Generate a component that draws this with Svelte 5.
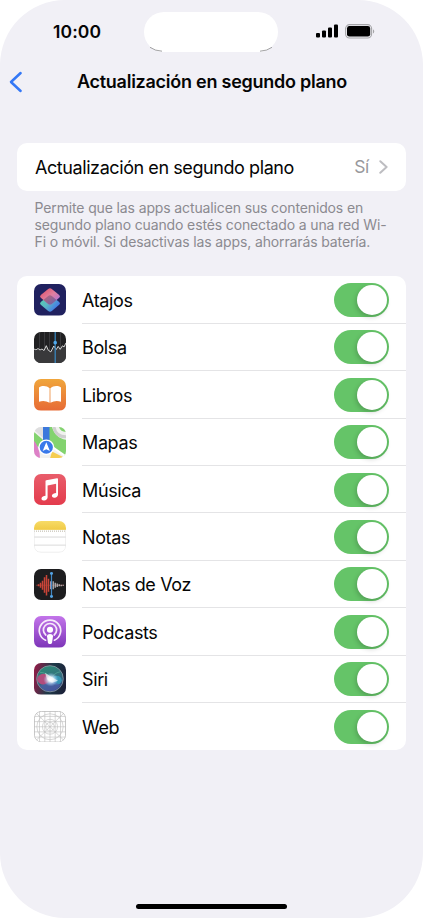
<script lang="ts">
    let apps = $state([
        { id: 'atajos', name: 'Atajos', on: true },
        { id: 'bolsa', name: 'Bolsa', on: true },
        { id: 'libros', name: 'Libros', on: true },
        { id: 'mapas', name: 'Mapas', on: true },
        { id: 'musica', name: 'Música', on: true },
        { id: 'notas', name: 'Notas', on: true },
        { id: 'voz', name: 'Notas de Voz', on: true },
        { id: 'podcasts', name: 'Podcasts', on: true },
        { id: 'siri', name: 'Siri', on: true },
        { id: 'web', name: 'Web', on: true }
    ]);
</script>

<div class="screen">
    <div class="status">
        <span class="time">10:00</span>
        <div class="island">
            <svg width="134" height="40" viewBox="0 0 134 40">
                <path d="M6 35.3q5 3.6 12 3.9M116 39.2q7-.3 12-3.9" fill="none" stroke="#8b8b8d" stroke-width=".8" />
            </svg>
        </div>
        <div class="status-icons">
            <svg width="22" height="14" viewBox="0 0 22 14">
                <rect x="0" y="9" width="4" height="4.6" rx="1.1" />
                <rect x="6" y="6.4" width="4" height="7.2" rx="1.1" />
                <rect x="12" y="3.6" width="4" height="10" rx="1.1" />
                <rect x="18" y=".4" width="4" height="13.2" rx="1.1" />
            </svg>
            <svg width="30" height="15" viewBox="0 0 30 15">
                <rect x=".6" y=".6" width="26" height="13.4" rx="4" fill="none" stroke="#a5a5a8" stroke-width="1.1" />
                <rect x="2" y="2" width="23.2" height="10.6" rx="2.4" />
                <path d="M28 5.2c1.7.7 1.7 3.7 0 4.4z" fill="#a5a5a8" />
            </svg>
        </div>
    </div>

    <header>
        <button class="back" aria-label="Atrás">
            <svg width="14" height="22" viewBox="0 0 14 22">
                <path d="M11.6 2 2 11l9.6 9" fill="none" stroke="#3478f6" stroke-width="2.5" stroke-linecap="round" stroke-linejoin="round" />
            </svg>
        </button>
        <h1>Actualización en segundo plano</h1>
    </header>

    <button class="card main-row">
        <span class="main-label">Actualización en segundo plano</span>
        <span class="value">Sí</span>
        <svg width="9" height="14" viewBox="0 0 9 14">
            <path d="M1.3 1.2 7.6 7l-6.3 5.8" fill="none" stroke="#bdbdc1" stroke-width="2" stroke-linecap="round" stroke-linejoin="round" />
        </svg>
    </button>

    <p class="hint">
        <span>Permite que las apps actualicen sus contenidos en</span>
        <span>segundo plano cuando estés conectado a una red Wi-</span>
        <span>Fi o móvil. Si desactivas las apps, ahorrarás batería.</span>
    </p>

    <div class="card list">
        {#each apps as app}
            <div class="row">
                <svg class="icon" width="32" height="31.5" viewBox="0 0 32 32" preserveAspectRatio="none">
                    {#if app.id === 'atajos'}
                        <defs>
                            <linearGradient id="at1" x1="0" y1="0" x2="1" y2="1">
                                <stop offset=".1" stop-color="#e0566c" />
                                <stop offset=".5" stop-color="#e07fa0" />
                                <stop offset=".9" stop-color="#a871dc" />
                            </linearGradient>
                            <linearGradient id="at2" x1="0" y1="0" x2="1" y2=".7">
                                <stop offset=".1" stop-color="#55cfb0" />
                                <stop offset=".5" stop-color="#5bb8c4" />
                                <stop offset=".9" stop-color="#447be6" />
                            </linearGradient>
                            <linearGradient id="at3" x2="1" y2="1">
                                <stop stop-color="#a3566f" />
                                <stop offset="1" stop-color="#4c5c98" />
                            </linearGradient>
                        </defs>
                        <rect width="32" height="32" fill="#20215f" />
                        <path d="M14.2 12.2q1.800-1.400 3.600 0l7.400 6.200q1.600 1.400 0 2.800l-7.400 6.200q-1.800 1.400-3.600 0l-7.400-6.200q-1.600-1.400 0-2.800z" fill="url(#at2)" />
                        <path d="M14.200 5q1.800-1.400 3.600 0l7.400 6.200q1.600 1.400 0 2.800l-7.400 6.200q-1.800 1.400-3.600 0L6.800 14q-1.600-1.400 0-2.800z" fill="url(#at1)" />
                        <path d="M9.300 16.200 14.200 12.200q1.800-1.400 3.600 0l4.800 4-4.800 4q-1.800 1.400-3.600 0z" fill="url(#at3)" opacity=".7" />
                    {:else if app.id === 'bolsa'}
                        <rect width="32" height="32" fill="#202022" />
                        <path d="M5.5 0v32M10.5 0v32M15.5 0v32M26.5 0v32" stroke="#414143" stroke-width=".8" />
                        <path d="m0 18.3 2 .7 2-1.4 2 1.5 2-1 2 1.6 2.3-6 2 5.5 2.5 1.2 3-6 2.4 3.6 2-3.2 2 3 2.3-3.6 1.5 1.2L32 11v21H0z" fill="#39393b" />
                        <path d="m0 17.3 2 .9 2-1.4 2 1.5 2-1 2 1.6 2.3-5 2 4.7 2.5 1.6 3-6 2.4 3.6 2-3.2 2 3 2.3-3.6 1.5 1.2L32 11" fill="none" stroke="#e7e7e7" stroke-width=".9" />
                        <path d="M21.2 0v32" stroke="#398bc5" stroke-width="1.2" />
                        <circle cx="21.2" cy="10.8" r="1.8" fill="#51a9ec" />
                    {:else if app.id === 'libros'}
                        <defs>
                            <linearGradient id="lib" x2="0" y2="1">
                                <stop stop-color="#f0a63c" />
                                <stop offset="1" stop-color="#e76b35" />
                            </linearGradient>
                        </defs>
                        <rect width="32" height="32" fill="url(#lib)" />
                        <path d="M15.6 9.4C12.6 6.5 8 6.6 5 8.6v14.6q5-2.3 10.6.9zM16.4 9.4C19.4 6.5 24 6.6 27 8.6v14.6q-5-2.3-10.6.9z" fill="#fff" />
                    {:else if app.id === 'mapas'}
                        <rect width="32" height="32" fill="#f1f1ef" />
                        <path d="M0 0h9v11L0 3z" fill="#dededf" />
                        <path d="M0 5 9 13v7H0z" fill="#83d36f" />
                        <path d="M15 0h3c2 7 7 12 14 13v17L15 17z" fill="#83d36f" />
                        <path d="M20 0c1 6 5 10 12 10" fill="none" stroke="#cfcfcf" stroke-width="3" />
                        <path d="M25 0q1.5 5 7 5V0z" fill="#83d36f" />
                        <path d="M0 14q6 7 6 18H0z" fill="#dd80c7" />
                        <path d="m18 25 14 7H16z" fill="#f5cd50" />
                        <path d="m18 20 14 10" stroke="#fff" stroke-width="2" />
                        <path d="M9 0h6.5v16H9z" fill="#3b78dc" />
                        <circle cx="12.3" cy="20.6" r="7.3" fill="#3979ea" stroke="#fff" stroke-width="1.4" />
                        <path d="m12.3 15.5 3.6 9-3.6-1.8-3.6 1.8z" fill="#fff" />
                    {:else if app.id === 'musica'}
                        <defs>
                            <linearGradient id="mus" x2="0" y2="1">
                                <stop stop-color="#e95d6b" />
                                <stop offset="1" stop-color="#e33b4c" />
                            </linearGradient>
                        </defs>
                        <rect width="32" height="32" fill="url(#mus)" />
                        <path d="M11.5 7.3q0-.8.8-1l10.7-2q1-.2 1 .8v15.6c0 2-1.5 3.2-3.4 3.4-1.7.2-2.9-.8-2.7-2.2.2-2.1 2.5-2.2 4.2-2.7V10l-8.5 1.6v12c0 2-1.6 3.2-3.4 3.4-1.7.2-2.9-.8-2.7-2.3.2-2 2.3-2.3 4-2.7z" fill="#fff" />
                    {:else if app.id === 'notas'}
                        <defs>
                            <linearGradient id="not" x2="0" y2="1">
                                <stop stop-color="#f7db67" />
                                <stop offset="1" stop-color="#f0ca46" />
                            </linearGradient>
                        </defs>
                        <rect width="32" height="32" fill="#fff" />
                        <rect width="32" height="9" fill="url(#not)" />
                        <path d="M0 10.3h32" stroke="#b8b4a4" stroke-width="1" stroke-dasharray="1 1" />
                        <path d="M0 16.3h32M0 24.5h32" stroke="#cfcfcf" stroke-width=".8" />
                        <path d="M.3 9v16q0 6.7 6.7 6.7h18q6.700 0 6.700-6.700V9" fill="none" stroke="#e2e2e2" stroke-width=".6" />
                    {:else if app.id === 'voz'}
                        <rect width="32" height="32" fill="#1d1d1f" />
                        <path d="M2 16.5h28" stroke="#813c36" stroke-width=".8" />
                        <path d="M4.5 15.5v2M6.5 14v5M8.5 12v9M10.5 8.5v15.5M12.5 6v21M14.5 10v13" stroke="#ca4438" stroke-width="1.5" />
                        <path d="M16.5 12.5v8" stroke="#b898a5" stroke-width="1" />
                        <path d="M19.2 12.5v8M21.2 14v5M23.2 14.8v3.4M25.2 15.5v2M27.2 16v1.5M29.2 16v1" stroke="#c7c7c9" stroke-width="1.2" />
                        <path d="M17.5 4.5v23.5" stroke="#4288c5" stroke-width="1.2" />
                        <circle cx="17.5" cy="4.5" r="1.5" fill="#53a4e5" />
                        <circle cx="17.5" cy="28" r="1.5" fill="#53a4e5" />
                    {:else if app.id === 'podcasts'}
                        <defs>
                            <linearGradient id="pod" x2="0" y2="1">
                                <stop stop-color="#c374ea" />
                                <stop offset="1" stop-color="#7e36b9" />
                            </linearGradient>
                        </defs>
                        <rect width="32" height="32" fill="url(#pod)" />
                        <path d="M11.6 24.6a10.7 10.7 0 1 1 8.8 0M11.8 19.3a6.6 6.6 0 1 1 8.4 0" fill="none" stroke="#f6eafa" stroke-width="1.7" stroke-linecap="round" />
                        <circle cx="16" cy="14" r="3.1" fill="#fff" />
                        <path d="M13 20.6c0-3 6-3 6 0l-.9 6.2c-.4 2.2-3.8 2.2-4.2 0z" fill="#fff" />
                    {:else if app.id === 'siri'}
                        <defs>
                            <linearGradient id="sbg" x1="0" y1=".4" x2="1" y2=".6">
                                <stop stop-color="#8a1f48" />
                                <stop offset=".5" stop-color="#1d3a48" />
                                <stop offset="1" stop-color="#1b2038" />
                            </linearGradient>
                            <linearGradient id="sorb" x1=".3" x2=".6" y2="1">
                                <stop stop-color="#2b8a74" />
                                <stop offset=".5" stop-color="#35707f" />
                                <stop offset="1" stop-color="#31427f" />
                            </linearGradient>
                            <radialGradient id="glow">
                                <stop stop-color="#fff" />
                                <stop offset=".35" stop-color="#eaf6ff" stop-opacity=".9" />
                                <stop offset="1" stop-color="#9fd0ff" stop-opacity="0" />
                            </radialGradient>
                        </defs>
                        <rect width="32" height="32" fill="url(#sbg)" />
                        <circle cx="16" cy="16" r="13.3" fill="url(#sorb)" stroke="#8f9ba8" stroke-width=".8" />
                        <ellipse cx="9.500" cy="16.500" rx="6.300" ry="5.500" fill="#c8477c" opacity=".85" />
                        <ellipse cx="22.500" cy="17.500" rx="5.300" ry="4.500" fill="#37a5c4" opacity=".75" />
                        <path d="M5.500 23q9-2 12-7 5 5 9 6-4 6.500-10.500 6.500T5.500 23z" fill="#5463b0" opacity=".6" />
                        <path d="M6 9.500q7 0 11 6.500 3-6 9-7" fill="none" stroke="#5db89c" stroke-width=".8" opacity=".7" />
                        <ellipse cx="16.800" cy="16.800" rx="7.500" ry="7" fill="url(#glow)" />
                        <path d="m11 10 7 4.500 6 3.500-6 2-5-3.500z" fill="#fff" opacity=".6" />
                    {:else}
                        <rect x=".4" y=".4" width="31.2" height="31.2" rx="7" fill="#fff" stroke="#b2b2b2" stroke-width=".8" />
                        <g fill="none" stroke="#bdbdbd" stroke-width=".6">
                            <path d="M5.5 0v32M10.8 0v32M16 0v32M21.2 0v32M26.5 0v32M0 5.5h32M0 10.8h32M0 16h32M0 21.2h32M0 26.5h32M1 1l30 30M31 1 1 31" />
                            <circle cx="16" cy="16" r="13.2" />
                            <circle cx="16" cy="16" r="7.6" />
                            <circle cx="16" cy="16" r="4.3" />
                        </g>
                    {/if}
                </svg>
                <div class="row-body">
                    <span class="name">{app.name}</span>
                    <button class="toggle" class:on={app.on} role="switch" aria-checked={app.on} aria-label={app.name} onclick={() => (app.on = !app.on)}>
                        <span class="knob"></span>
                    </button>
                </div>
            </div>
        {/each}
    </div>

    <div class="home"></div>
</div>

<style>
    :global(body) {
        background: #fff;
    }

    .screen {
        box-sizing: border-box;
        display: flex;
        flex-direction: column;
        width: 423px;
        height: 918px;
        overflow: hidden;
        border-radius: 65px;
        background: #f1f0f6;
        color: #050505;
        font-family: Inter, "Liberation Sans", sans-serif;
    }

    button {
        padding: 0;
        border: 0;
        background: none;
        color: inherit;
        font: inherit;
        text-align: left;
    }

    svg {
        display: block;
        flex: none;
    }

    .status {
        display: grid;
        grid-template-columns: 144px 134px 1fr;
        height: 40px;
        padding-top: 12px;
    }

    .time {
        padding-left: 53px;
        font-size: 17.5px;
        font-weight: 600;
        line-height: 40px;
        letter-spacing: 0.1px;
    }

    .island {
        height: 39.5px;
        border-radius: 20px;
        background: #fff;
    }

    .status-icons {
        display: flex;
        gap: 7px;
        padding: 12px 0 0 38px;
    }

    header {
        display: flex;
        align-items: center;
        height: 60px;
    }

    .back {
        width: 14px;
        margin: -1px 0 0 9px;
    }

    h1 {
        flex: 1;
        margin: -2px 22px 0 0;
        text-align: center;
        font-size: 18px;
        font-weight: 600;
        letter-spacing: -0.25px;
        white-space: nowrap;
    }

    .card {
        width: 389px;
        margin-left: 17px;
        border-radius: 10px;
        background: #fff;
    }

    .main-row {
        display: flex;
        align-items: center;
        box-sizing: border-box;
        height: 47.5px;
        margin-top: 31px;
        padding: 0 18px;
        font-size: 18px;
    }

    .main-label {
        flex: 1;
        padding-top: 1px;
        letter-spacing: -0.42px;
        white-space: nowrap;
    }

    .value {
        margin-right: 10px;
        color: #98989c;
        font-size: 17.5px;
        letter-spacing: -0.3px;
    }

    .hint {
        display: flex;
        flex-direction: column;
        margin: 8px 0 26.3px 34.5px;
        color: #8b8a90;
        font-size: 14px;
        line-height: 17.2px;
        letter-spacing: -0.13px;
        white-space: nowrap;
    }

    .list {
        height: 474px;
        overflow: hidden;
    }

    .row {
        display: flex;
        align-items: center;
        height: 47.4px;
        padding-left: 17px;
    }

    .icon {
        border-radius: 7px;
    }

    .row-body {
        display: flex;
        flex: 1;
        align-items: center;
        box-sizing: border-box;
        height: 100%;
        margin-left: 16px;
        padding-right: 17.3px;
        border-bottom: 1px solid #e4e4e6;
    }

    .row:last-child .row-body {
        border-bottom-color: transparent;
    }

    .name {
        flex: 1;
        padding-top: 2px;
        font-size: 18px;
        letter-spacing: -0.38px;
    }

    .toggle {
        box-sizing: border-box;
        display: flex;
        width: 55px;
        height: 34px;
        margin-top: 1px;
        padding: 2px;
        border-radius: 17px;
        background: #e9e9eb;
    }

    .on {
        justify-content: flex-end;
        background: #65c468;
    }

    .knob {
        width: 30px;
        height: 30px;
        border-radius: 50%;
        background: #fff;
        box-shadow: -1px 2px 5px rgba(0, 0, 0, 0.2);
    }

    .home {
        width: 151px;
        height: 5px;
        margin: auto auto 9px;
        border-radius: 3px;
        background: #000;
    }
</style>
